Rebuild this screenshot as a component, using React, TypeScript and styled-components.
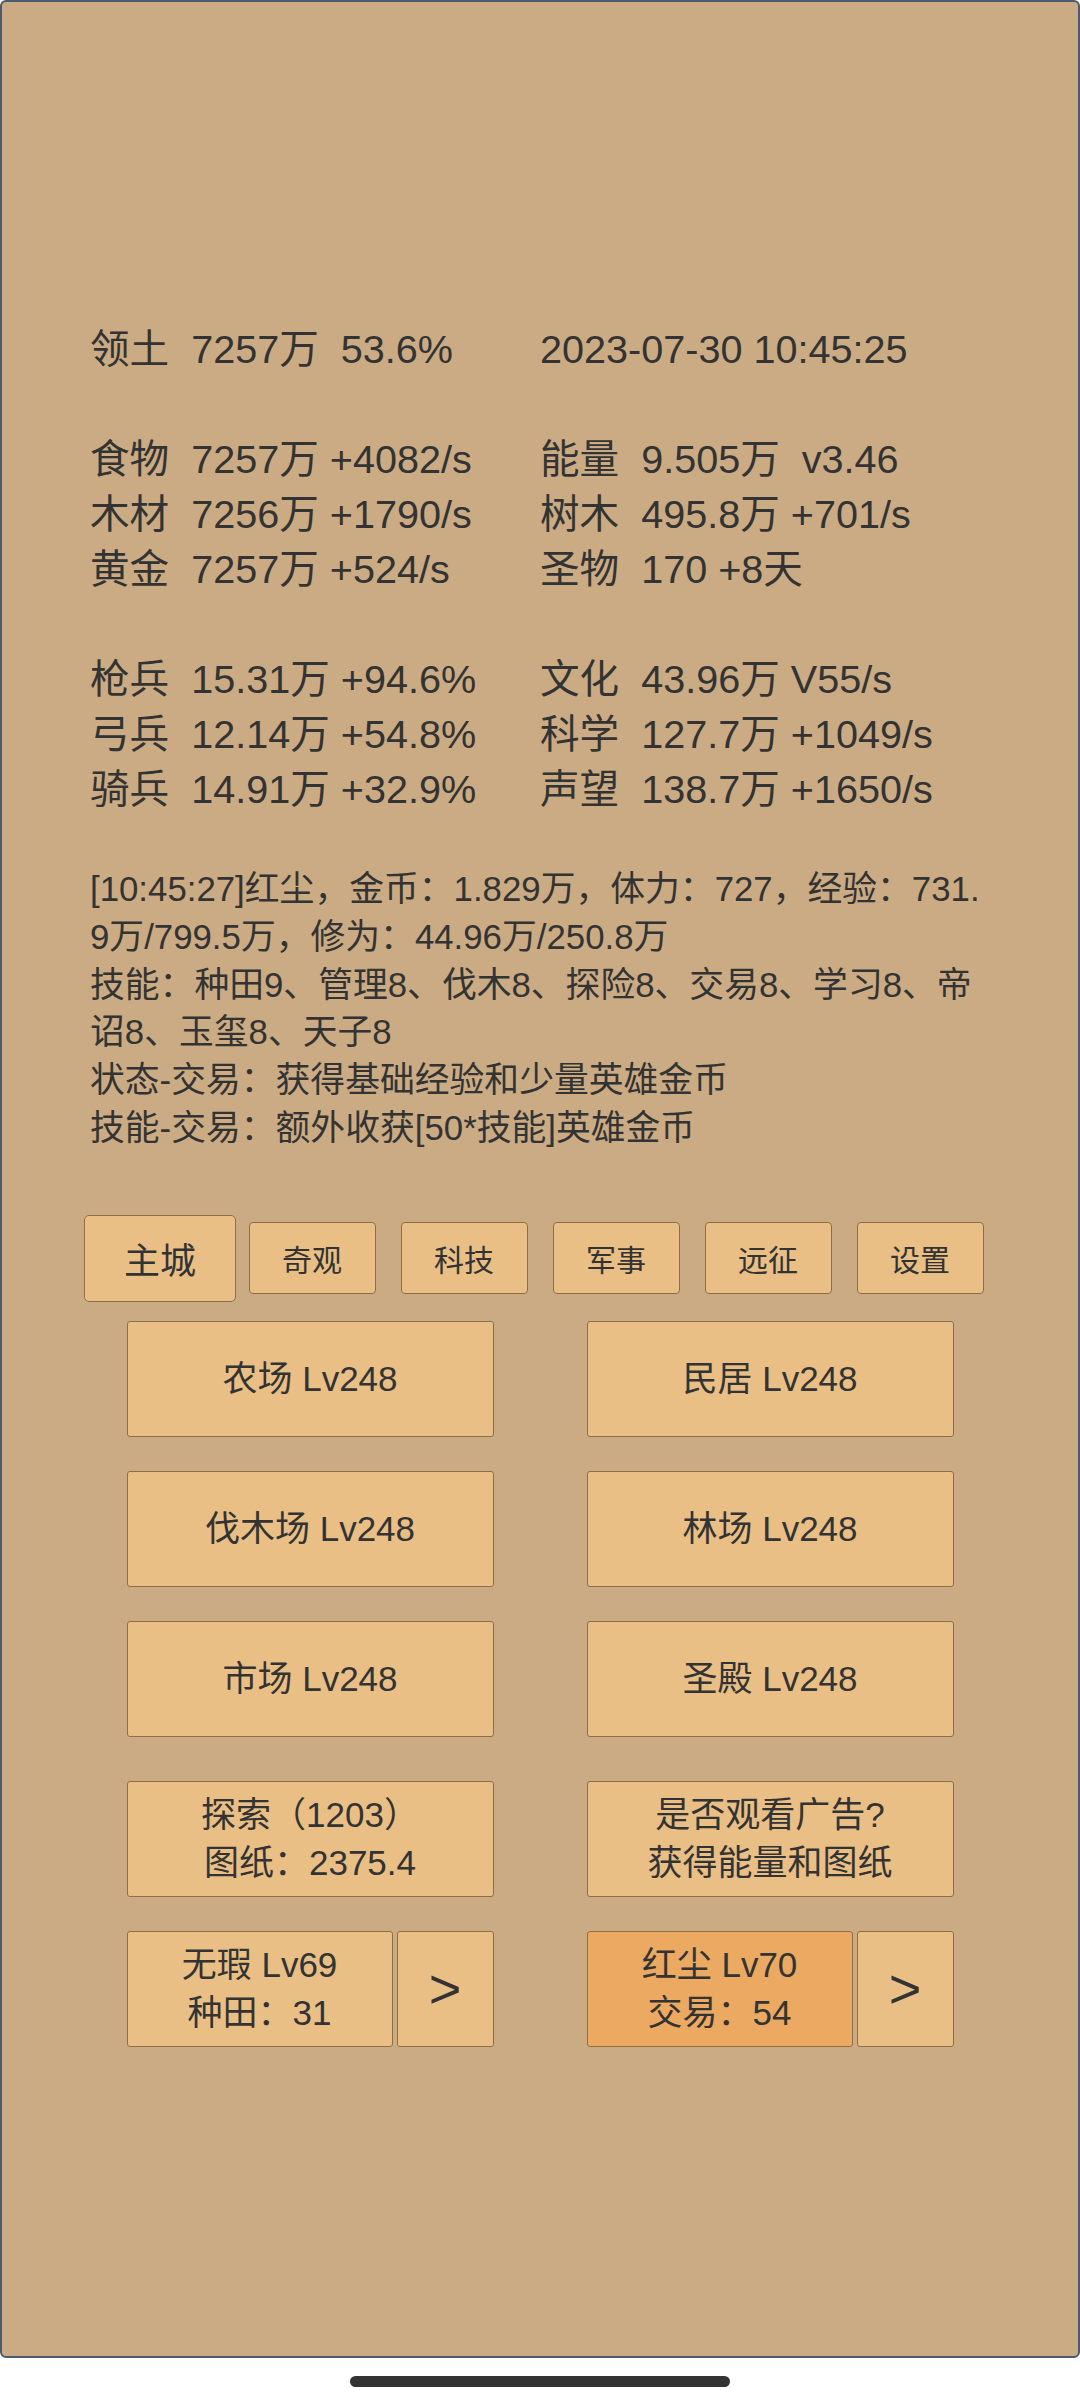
import React from 'react';
import styled, { createGlobalStyle } from 'styled-components';

const GlobalStyle = createGlobalStyle`
  html, body {
    margin: 0;
    padding: 0;
    background: #ffffff;
  }
  body {
    font-family: "Liberation Sans", "Noto Sans CJK SC", sans-serif;
    color: #333333;
  }
  * {
    box-sizing: border-box;
  }
`;

const Screen = styled.div`
  width: 1080px;
  height: 2400px;
  display: flex;
  flex-direction: column;
  background: #ffffff;
`;

const Panel = styled.div`
  height: 2358px;
  border: 2px solid #4b5a6e;
  border-radius: 6px;
  background: #cbab83;
  padding-top: 320px;
  display: flex;
  flex-direction: column;
`;

const StatsGrid = styled.div`
  display: grid;
  grid-template-columns: 450px 450px;
  padding: 0 88px;
  font-size: 39.6px;
  line-height: 55px;
`;

const StatLine = styled.div<{ $gap?: boolean }>`
  white-space: pre;
  margin-top: ${(p) => (p.$gap ? '55px' : '0')};
`;

const Log = styled.div`
  margin-top: 48px;
  padding: 0 88px;
  font-size: 34.8px;
  line-height: 47.8px;
  word-break: break-all;
`;

const TabBar = styled.div`
  margin-top: 63px;
  display: flex;
  justify-content: center;
  align-items: center;
  height: 87px;
`;

const TabSlot = styled.div`
  width: 152px;
  display: flex;
  justify-content: center;
`;

const Tab = styled.div<{ $active?: boolean }>`
  width: ${(p) => (p.$active ? '152px' : '127px')};
  height: ${(p) => (p.$active ? '87px' : '72px')};
  font-size: ${(p) => (p.$active ? '36px' : '30px')};
  border-radius: ${(p) => (p.$active ? '5px' : '4px')};
  background: #e9bf86;
  border: 1px solid #8f6d45;
  display: flex;
  align-items: center;
  justify-content: center;
`;

const ButtonGrid = styled.div<{ $top: number }>`
  margin-top: ${(p) => p.$top}px;
  display: grid;
  grid-template-columns: 367px 367px;
  column-gap: 93px;
  row-gap: 34px;
  justify-content: center;
`;

const Button = styled.div<{ $active?: boolean }>`
  height: 116px;
  background: ${(p) => (p.$active ? '#eba961' : '#e9bf86')};
  border: 1px solid #8f6d45;
  border-radius: 3px;
  display: flex;
  flex-direction: column;
  align-items: center;
  justify-content: center;
  font-size: 35px;
  line-height: 48px;
  text-align: center;
  white-space: pre;
`;

const HeroCard = styled.div`
  display: flex;
  gap: 4px;
`;

const HeroMain = styled(Button)`
  width: 266px;
`;

const ArrowButton = styled(Button)`
  width: 97px;
  font-size: 56px;
`;

const Footer = styled.div`
  flex: 1;
  display: flex;
  justify-content: center;
  padding-top: 18px;
`;

const HomeBar = styled.div`
  width: 380px;
  height: 11px;
  border-radius: 6px;
  background: #333333;
`;

const stats: [string, string, boolean?][] = [
  ['领土  7257万  53.6%', '2023-07-30 10:45:25'],
  ['食物  7257万 +4082/s', '能量  9.505万  v3.46', true],
  ['木材  7256万 +1790/s', '树木  495.8万 +701/s'],
  ['黄金  7257万 +524/s', '圣物  170 +8天'],
  ['枪兵  15.31万 +94.6%', '文化  43.96万 V55/s', true],
  ['弓兵  12.14万 +54.8%', '科学  127.7万 +1049/s'],
  ['骑兵  14.91万 +32.9%', '声望  138.7万 +1650/s'],
];

const tabs = ['主城', '奇观', '科技', '军事', '远征', '设置'];

const buildings = ['农场 Lv248', '民居 Lv248', '伐木场 Lv248', '林场 Lv248', '市场 Lv248', '圣殿 Lv248'];

const App = () => {
  return (
    <Screen>
      <GlobalStyle />
      <Panel>
        <StatsGrid>
          {stats.map(([a, b, gap]) => (
            <React.Fragment key={a}>
              <StatLine $gap={gap}>{a}</StatLine>
              <StatLine $gap={gap}>{b}</StatLine>
            </React.Fragment>
          ))}
        </StatsGrid>
        <Log>
          <div>[10:45:27]红尘，金币：1.829万，体力：727，经验：731.9万/799.5万，修为：44.96万/250.8万</div>
          <div>技能：种田9、管理8、伐木8、探险8、交易8、学习8、帝诏8、玉玺8、天子8</div>
          <div>状态-交易：获得基础经验和少量英雄金币</div>
          <div>技能-交易：额外收获[50*技能]英雄金币</div>
        </Log>
        <TabBar>
          {tabs.map((t, i) => (
            <TabSlot key={t}>
              <Tab $active={i === 0}>{t}</Tab>
            </TabSlot>
          ))}
        </TabBar>
        <ButtonGrid $top={19}>
          {buildings.map((b) => (
            <Button key={b}>{b}</Button>
          ))}
        </ButtonGrid>
        <ButtonGrid $top={44}>
          <Button>{'探索（1203）\n图纸：2375.4'}</Button>
          <Button>{'是否观看广告?\n获得能量和图纸'}</Button>
          <HeroCard>
            <HeroMain>{'无瑕 Lv69\n种田：31'}</HeroMain>
            <ArrowButton>&gt;</ArrowButton>
          </HeroCard>
          <HeroCard>
            <HeroMain $active>{'红尘 Lv70\n交易：54'}</HeroMain>
            <ArrowButton>&gt;</ArrowButton>
          </HeroCard>
        </ButtonGrid>
      </Panel>
      <Footer>
        <HomeBar />
      </Footer>
    </Screen>
  );
};

export default App;
